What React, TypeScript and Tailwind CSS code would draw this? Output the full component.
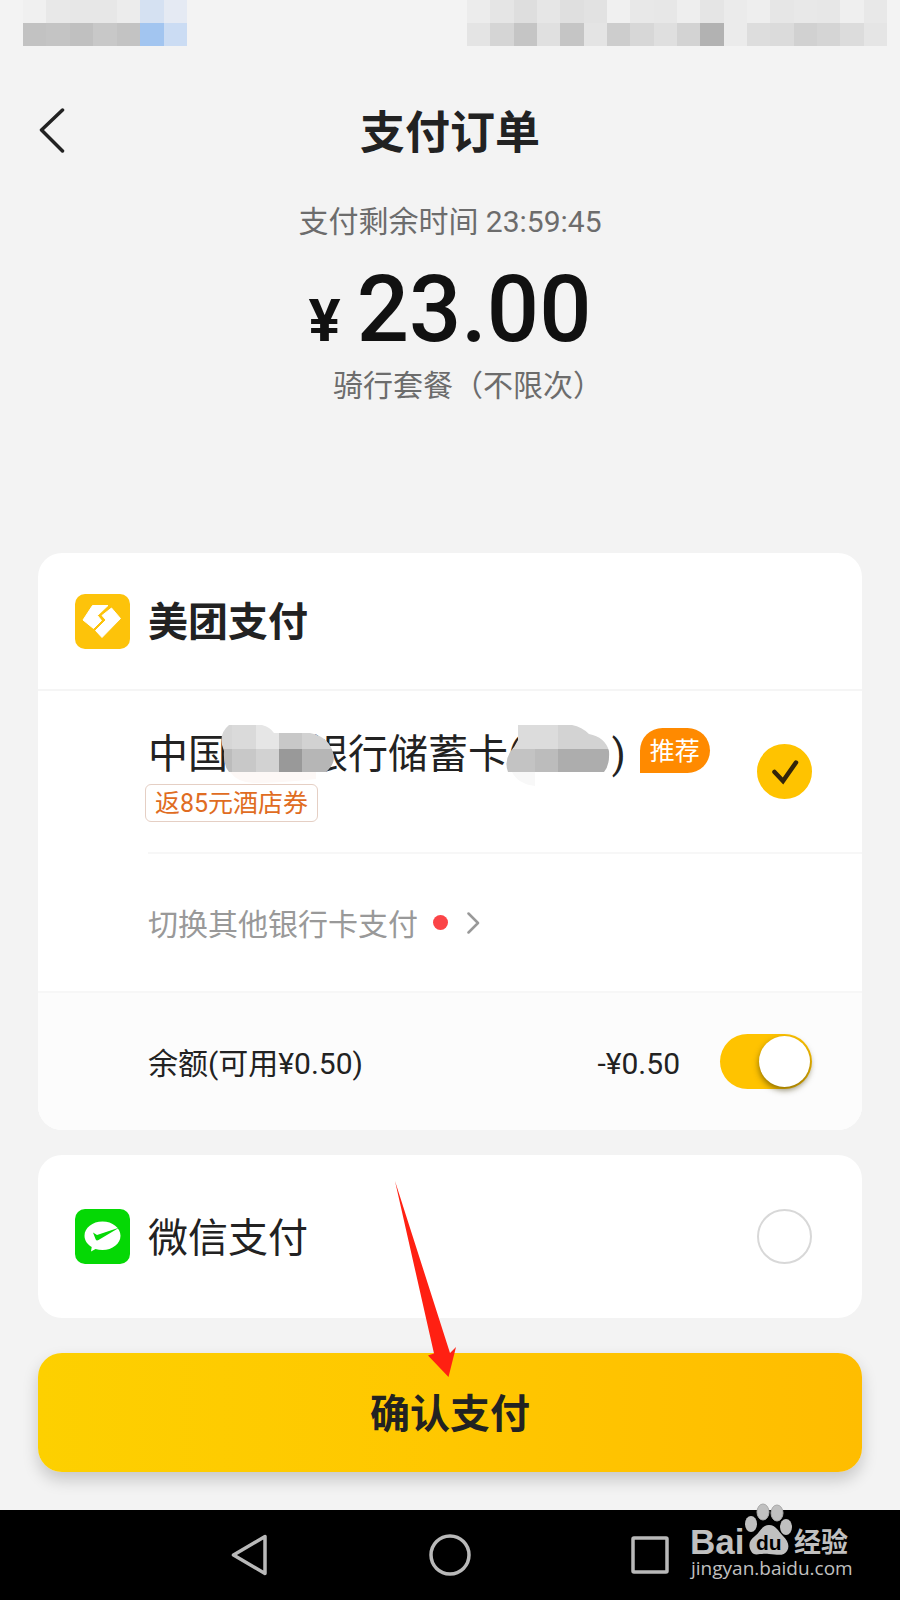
import { useState } from "react";

const statusLeft = [
  ["#f0f0f0", "#e8e8e8", "#e7e7e7", "#e7e7e7", "#ececec", "#d5e1f2", "#e5eaf3"],
  ["#c2c2c2", "#c4c4c4", "#c0c0c0", "#c8c8c8", "#c3c3c3", "#a2c5f0", "#cbdcf3"],
];

const statusRight = [
  ["#ececec", "#e5e5e5", "#dedede", "#e6e6e6", "#dfdfdf", "#e2e2e2", "#f0f0f0", "#e8e8e8", "#e7e7e7", "#eeeeee", "#e5e5e5", "#ebebeb", "#eeeeee", "#e6e6e6", "#e8e8e8", "#e7e7e7", "#efefef", "#e8e8e8"],
  ["#e4e4e4", "#d5d5d5", "#c5c5c5", "#e0e0e0", "#c5c5c5", "#e4e4e4", "#cdcdcd", "#d7d7d7", "#dfdfdf", "#d3d3d3", "#b2b2b2", "#ebebeb", "#dddddd", "#dbdbdb", "#d1d1d1", "#d5d5d5", "#dcdcdc", "#e5e5e5"],
];

function Blocks({ rows, className }: { rows: string[][]; className: string }) {
  return (
    <div className={className} aria-hidden="true">
      {rows.map((row, i) => (
        <div key={i} className="flex h-[23px]">
          {row.map((c, j) => (
            <span key={j} className="flex-1" style={{ backgroundColor: c }} />
          ))}
        </div>
      ))}
    </div>
  );
}

function MeituanLogo() {
  return (
    <svg viewBox="0 0 55 55" className="size-[55px] shrink-0" aria-hidden="true">
      <rect width="55" height="55" rx="10" fill="#fdc30a" />
      <path d="M17.5 11.5H33L22.5 21.5 26.5 26.500 18.5 34.5 8 26Z" fill="#fff" stroke="#fff" strokeWidth="1" strokeLinejoin="round" />
      <path d="M36.5 14 45.5 24.5 27 43.5 20.5 36.5 31 26 27 21.5Z" fill="#fff" stroke="#fff" strokeWidth="1" strokeLinejoin="round" />
    </svg>
  );
}

function WechatLogo() {
  return (
    <svg viewBox="0 0 55 55" className="size-[55px] shrink-0" aria-hidden="true">
      <rect width="55" height="55" rx="10" fill="#05d805" />
      <path d="M27.5 12.5C37.5 12.5 45.5 18.8 45.5 26.7S37.5 41 27.5 41C25 41 22.6 40.6 20.5 39.9L16 42.5 16.7 38C12.3 35.4 9.5 31.3 9.5 26.7 9.5 18.8 17.5 12.5 27.5 12.5Z" fill="#fff" />
      <path d="M18 23.5 22 26 44.500 18.500 23.5 31C22 31.8 21.2 31.4 20.6 30.2Z" fill="#05d805" />
    </svg>
  );
}

function Radio({ id, checked, onChange }: { id: string; checked: boolean; onChange: () => void }) {
  return (
    <span className="relative flex size-[55px] shrink-0">
      <input
        type="radio"
        name="method"
        id={id}
        checked={checked}
        onChange={onChange}
        className="size-full cursor-pointer appearance-none rounded-full border-2 border-[#d8d8d8] bg-white checked:border-[#ffc300] checked:bg-[#ffc300]"
      />
      {checked && (
        <svg viewBox="0 0 55 55" className="pointer-events-none absolute inset-0" aria-hidden="true">
          <path d="M17.5 28 26 37 39 18.5" fill="none" stroke="#33240a" strokeWidth="4.5" strokeLinecap="round" />
        </svg>
      )}
    </span>
  );
}

function BankMask() {
  return (
    <svg viewBox="0 0 116 60" className="absolute top-0 -left-2 h-[60px] w-[116px]" aria-hidden="true">
      <clipPath id="bankMask">
        <path d="M9 0H42Q50 2 54 8H90Q111 12 114 32Q114 40 106 47H9Q3 40 4 26Q-3 10 9 0Z" />
      </clipPath>
      <path d="M10 47H96V54Q60 58 34 58Q18 58 10 47Z" fill="#fdf8f6" />
      <g clipPath="url(#bankMask)">
        <rect width="12" height="24" fill="#d6d6d6" />
        <rect x="12" width="24" height="24" fill="#dadada" />
        <rect x="36" width="23" height="24" fill="#e6e6e6" />
        <rect x="59" width="23" height="24" fill="#c8c8c8" />
        <rect x="82" width="34" height="24" fill="#d2d2d2" />
        <rect y="24" width="12" height="24" fill="#bcbcbc" />
        <rect x="12" y="24" width="24" height="24" fill="#c8c8c8" />
        <rect x="36" y="24" width="23" height="24" fill="#d2d2d2" />
        <rect x="59" y="24" width="23" height="24" fill="#999" />
        <rect x="82" y="24" width="34" height="24" fill="#b6b6b6" />
      </g>
    </svg>
  );
}

function NumberMask() {
  return (
    <svg viewBox="0 0 104 62" className="absolute top-0 -left-4 h-[62px] w-[104px]" aria-hidden="true">
      <clipPath id="numberMask">
        <path d="M12 0H66Q76 2 83 9Q99 12 103 26Q104 40 98 47H2Q-3 34 8 22L12 15Z" />
      </clipPath>
      <path d="M6 47H29V61Q12 59 6 47Z" fill="#f8f8f8" />
      <g clipPath="url(#numberMask)">
        <rect width="52" height="24" fill="#dcdcdc" />
        <rect x="52" width="52" height="24" fill="#d3d3d3" />
        <rect y="24" width="29" height="24" fill="#c3c3c3" />
        <rect x="29" y="24" width="23" height="24" fill="#bcbcbc" />
        <rect x="52" y="24" width="52" height="24" fill="#adadad" />
      </g>
    </svg>
  );
}

function Watermark() {
  return (
    <svg
      viewBox="0 0 180 90"
      className="pointer-events-none absolute right-[34px] bottom-5 h-[90px] w-[180px]"
      role="img"
      aria-label="Baidu 经验"
    >
      <g fill="#c0c0c0">
        <text x="4" y="64" fontSize="35" fontWeight="700" fontFamily="'Liberation Sans', sans-serif">Bai</text>
        <ellipse cx="65" cy="34" rx="6" ry="8" />
        <ellipse cx="77" cy="22" rx="6" ry="8" stroke="#aaa" strokeWidth="1" />
        <ellipse cx="91" cy="23" rx="6" ry="8" stroke="#aaa" strokeWidth="1" />
        <ellipse cx="100" cy="37" rx="6" ry="8" />
        <path d="M83 35C90 35 92 41 97 46S104 56 101 61 93 65 83 64 68 67 65 61 63 51 69 46 76 35 83 35Z" />
        <text x="108" y="62" fontSize="27" fontWeight="700" fontFamily="'Noto Sans CJK SC', sans-serif">经验</text>
        <text x="5" y="85" fontSize="19" fontFamily="'Open Sans', sans-serif">jingyan.baidu.com</text>
      </g>
      <text x="70" y="60" fontSize="21" fontWeight="700" fill="#000" fontFamily="'Liberation Sans', sans-serif">du</text>
    </svg>
  );
}

export default function App() {
  const [method, setMethod] = useState("card");
  const [balance, setBalance] = useState(true);

  return (
    <div className="relative flex min-h-screen flex-col bg-[#f3f3f3] font-['Roboto','Noto_Sans_CJK_SC',sans-serif] text-[#222]">
      <div className="flex justify-between pr-[13px] pl-[23px]">
        <Blocks rows={statusLeft} className="w-[164px]" />
        <Blocks rows={statusRight} className="w-[420px]" />
      </div>

      <header className="mt-12 grid h-[76px] grid-cols-[1fr_auto_1fr] items-center px-[38px]">
        <button type="button" aria-label="返回" className="cursor-pointer justify-self-start">
          <svg viewBox="0 0 28 48" className="h-12 w-7" fill="none" stroke="#222" strokeWidth="3.5" strokeLinecap="round" strokeLinejoin="round" aria-hidden="true">
            <path d="M24.500 2 3.500 22 24.500 43" />
          </svg>
        </button>
        <h1 className="pt-1 text-[45px] leading-[60px] font-bold">支付订单</h1>
      </header>

      <main className="flex flex-col px-[38px]">
        <section className="mt-8 flex flex-col items-center text-[30px] leading-10 text-[#6c6c6c]">
          <p>支付剩余时间 23:59:45</p>
          <p className="mt-3 flex items-baseline gap-4 text-[#111]">
            <span className="text-[60px] leading-[60px] font-bold">¥</span>
            <span className="text-[92px] leading-[112px] font-medium">23.00</span>
          </p>
          <p className="pl-9">骑行套餐（不限次）</p>
        </section>

        <section className="mt-[147px] overflow-hidden rounded-3xl bg-white">
          <div className="flex h-[138px] items-center gap-[18px] border-b-2 border-[#f5f5f5] px-[37px]">
            <MeituanLogo />
            <h2 className="pt-1 text-[40px] leading-[56px] font-bold">美团支付</h2>
          </div>

          <div className="ml-[110px] flex h-[163px] items-center justify-between border-b-2 border-[#f7f7f7] pr-[50px]">
            <label htmlFor="card" className="flex cursor-pointer flex-col items-start pt-1">
              <span className="flex h-[58px] items-center text-[40px] leading-[60px] whitespace-nowrap">
                中国
                <span className="relative h-[60px] w-20">
                  <BankMask />
                </span>
                银行储蓄卡(
                <span className="relative h-[60px] w-[90px]">
                  <NumberMask />
                </span>
                )
                <span className="mb-2 ml-[14px] rounded-full rounded-bl-none bg-[#ff8a00] px-[10px] pt-[2px] text-[25px] leading-[43px] text-white">推荐</span>
              </span>
              <span className="-ml-[3px] rounded-md border border-[#e5cfc4] px-[9px] pt-[2px] text-[25px] leading-[34px] text-[#e06c22]">
                返85元酒店券
              </span>
            </label>
            <Radio id="card" checked={method === "card"} onChange={() => setMethod("card")} />
          </div>

          <a href="#cards" className="flex h-[139px] items-center border-b-2 border-[#f7f7f7] pl-[110px] text-[30px] leading-10 text-[#999]">
            <span className="pt-1">切换其他银行卡支付</span>
            <span className="ml-[15px] size-[15px] rounded-full bg-[#fb4447]" />
            <svg viewBox="0 0 14 22" className="ml-[18px] h-[22px] w-[14px]" fill="none" stroke="#999" strokeWidth="2.5" strokeLinecap="round" strokeLinejoin="round" aria-hidden="true">
              <path d="M2.5 1.5 12 11 2.5 20.5" />
            </svg>
          </a>

          <div className="flex h-[137px] items-center bg-[#fcfcfc] pr-[50px] pl-[110px] text-[30px] leading-10">
            <label htmlFor="balance" className="pt-1">余额(可用¥0.50)</label>
            <span className="mr-10 ml-auto pt-1">-¥0.50</span>
            <span className="relative flex h-[55px] w-[92px]">
              <input
                type="checkbox"
                role="switch"
                id="balance"
                checked={balance}
                onChange={(e) => setBalance(e.target.checked)}
                className="peer size-full cursor-pointer appearance-none rounded-full bg-[#ddd] checked:bg-[#ffc300]"
              />
              <span className="pointer-events-none absolute top-[2px] left-[2px] size-[51px] rounded-full bg-white shadow-[0_3px_6px_rgba(60,50,0,0.6)] peer-checked:right-[2px] peer-checked:left-auto" />
            </span>
          </div>
        </section>

        <section className="mt-[25px] flex h-[163px] items-center justify-between rounded-3xl bg-white pr-[50px] pl-[37px]">
          <label htmlFor="wechat" className="flex cursor-pointer items-center gap-[18px] text-[40px] leading-[56px]">
            <WechatLogo />
            <span className="pt-1">微信支付</span>
          </label>
          <Radio id="wechat" checked={method === "wechat"} onChange={() => setMethod("wechat")} />
        </section>

        <div className="relative mt-[35px] mb-[38px]">
          <button
            type="button"
            className="h-[119px] w-full cursor-pointer rounded-3xl bg-linear-to-r from-[#fdd000] via-[#ffc700] to-[#ffbd00] pt-1 text-[40px] leading-[56px] font-bold shadow-[0_8px_16px_rgba(0,0,0,0.18)]"
          >
            确认支付
          </button>
          <svg viewBox="0 0 64 198" className="pointer-events-none absolute -top-[173px] left-1/2 -ml-[56px] h-[198px] w-16" fill="#ff2012" aria-hidden="true">
            <path d="M1 1 56 173 62 167 54.5 197 34 175.5 40 173.5Z" />
          </svg>
        </div>
      </main>

      <nav className="mt-auto flex h-[90px] items-center justify-center gap-[156px] bg-black">
        <button type="button" aria-label="后退" className="cursor-pointer">
          <svg viewBox="0 0 44 44" className="size-11" fill="none" stroke="#b9b9b9" strokeWidth="3.5" strokeLinejoin="round" aria-hidden="true">
            <path d="M37 3.5V40.5L5.5 22Z" />
          </svg>
        </button>
        <button type="button" aria-label="主页" className="cursor-pointer">
          <svg viewBox="0 0 44 44" className="size-11" fill="none" stroke="#b9b9b9" strokeWidth="3.5" aria-hidden="true">
            <circle cx="22" cy="22" r="19" />
          </svg>
        </button>
        <button type="button" aria-label="最近任务" className="cursor-pointer">
          <svg viewBox="0 0 44 44" className="size-11" fill="none" stroke="#b9b9b9" strokeWidth="3.5" strokeLinejoin="round" aria-hidden="true">
            <rect x="5" y="5" width="34" height="34" rx="1" />
          </svg>
        </button>
      </nav>
      <Watermark />
    </div>
  );
}
